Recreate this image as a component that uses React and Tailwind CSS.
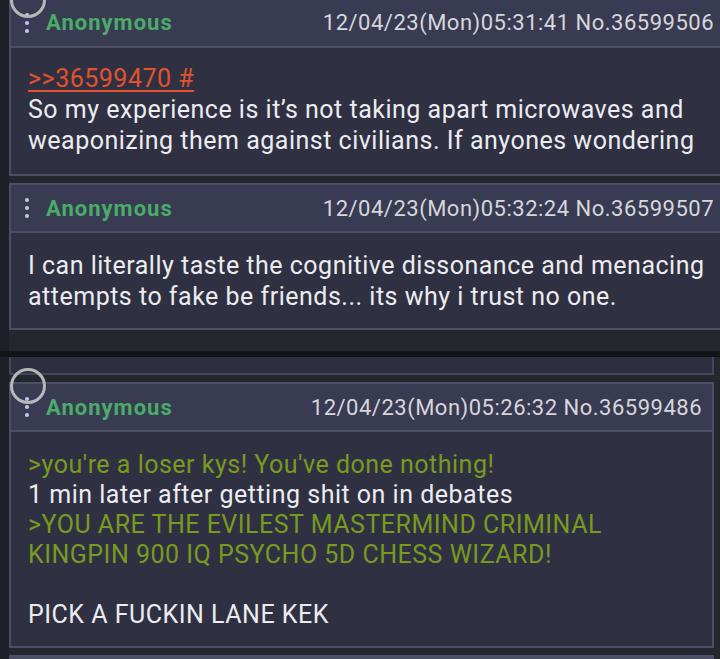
import React from 'react';

const font = { fontFamily: 'Roboto, "Noto Sans", sans-serif' };

const Dots = () => (
    <div className="flex flex-col items-center gap-[4px] w-[8px]">
        <span className="w-[4px] h-[4px] rounded-full bg-[#c9c5f2]" />
        <span className="w-[4px] h-[4px] rounded-full bg-[#c9c5f2]" />
        <span className="w-[4px] h-[4px] rounded-full bg-[#c9c5f2]" />
    </div>
);

const Ring = ({ className }) => (
    <div className={`absolute w-[36px] h-[36px] rounded-full border-[3px] border-[#b7b7b9] ${className}`} />
);

const Header = ({ date, no, h }) => (
    <div className={`flex items-center justify-between pl-[12px] pr-[10px] bg-[#383b52] border-b-2 border-[#4b4e64] ${h}`}>
        <div className="flex items-center gap-[15px]">
            <Dots />
            <span className="text-[22px] font-bold tracking-[1px] text-[#4bab69]">Anonymous</span>
        </div>
        <span className="text-[22px] tracking-[0.5px] text-[#d6d6db] whitespace-nowrap">
            {date} No.{no}
        </span>
    </div>
);

const Card = ({ date, no, children, className = '', headH, bodyCls }) => (
    <div className={`border-2 border-[#4b4e64] bg-[#2f3143] ${className}`}>
        <Header date={date} no={no} h={headH} />
        <div className={`pl-[17px] pr-[4px] text-[25px] tracking-[0.5px] text-[#ececef] ${bodyCls}`}>{children}</div>
    </div>
);

export default function App() {
    return (
        <div className="relative h-[659px] w-[720px] overflow-hidden bg-[#25272f] flex" style={font}>
            <div className="w-[9px] shrink-0 bg-[#1e2027]" />
            <div className="flex-1 flex flex-col min-w-0">
                <Card
                    className="mt-[-3px] mr-[-6px]"
                    headH="h-[49px]"
                    bodyCls="pt-[15px] pb-[18px] leading-[31px]"
                    date="12/04/23(Mon)05:31:41"
                    no="36599506"
                >
                    <a className="text-[#e2522d] underline underline-offset-[3px] decoration-[2px]">&gt;&gt;36599470 #</a>
                    <p>So my experience is it’s not taking apart microwaves and weaponizing them against civilians. If anyones wondering</p>
                </Card>

                <Card
                    className="mt-[7px] mr-[-6px]"
                    headH="h-[48px]"
                    bodyCls="pt-[17px] pb-[16px] leading-[31px]"
                    date="12/04/23(Mon)05:32:24"
                    no="36599507"
                >
                    <p>I can literally taste the cognitive dissonance and menacing attempts to fake be friends... its why i trust no one.</p>
                </Card>

                <div className="h-[22px]" />
                <div className="h-[6px] bg-[#131418] ml-[-9px]" />
                <div className="h-[19px] mr-[6px] bg-[#2d2f40] border-x-2 border-b-2 border-[#44475c]" />
                <div className="h-[8px]" />

                <Card
                    className="mr-[6px]"
                    headH="h-[48px]"
                    bodyCls="pt-[18px] pb-[16px] leading-[30px]"
                    date="12/04/23(Mon)05:26:32"
                    no="36599486"
                >
                    <p className="text-[#7a9a1e]">&gt;you're a loser kys! You've done nothing!</p>
                    <p>1 min later after getting shit on in debates</p>
                    <p className="text-[#7a9a1e]">&gt;YOU ARE THE EVILEST MASTERMIND CRIMINAL KINGPIN 900 IQ PSYCHO 5D CHESS WIZARD!</p>
                    <p>&nbsp;</p>
                    <p>PICK A FUCKIN LANE KEK</p>
                </Card>

                <div className="h-[7px]" />
                <div className="flex-1 bg-[#383b52] border-2 border-[#4b4e64] mr-[6px]" />
            </div>

            <Ring className="left-[10px] top-[-18px]" />
            <Ring className="left-[10px] top-[368px]" />
        </div>
    );
}
